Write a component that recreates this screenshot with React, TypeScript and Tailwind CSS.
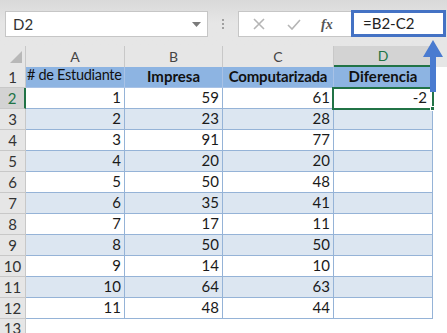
import React from "react";

const data: [number, number, number][] = [
  [1, 59, 61],
  [2, 23, 28],
  [3, 91, 77],
  [4, 20, 20],
  [5, 50, 48],
  [6, 35, 41],
  [7, 17, 11],
  [8, 50, 50],
  [9, 14, 10],
  [10, 64, 63],
  [11, 48, 44],
];

const font = { fontFamily: "Lato, 'Liberation Sans', sans-serif" };

export default function App() {
  return (
    <div className="relative w-[447px] h-[333px] overflow-hidden bg-white text-[15px] text-[#1a1a1a]" style={font}>
      {/* Top bar */}
      <div className="h-[46px] bg-[#e6e6e6] bg-gradient-to-b from-[#d9d9d9] via-[#e6e6e6] to-[#e6e6e6] flex items-start pt-[11px] pl-[5px]">
        <div className="w-[203px] h-[26px] bg-white border border-[#c6c6c6] flex items-center justify-between pl-[7px] pr-[6px]">
          <span className="text-[15px] text-[#333]">D2</span>
          <svg width="9" height="5" viewBox="0 0 9 5"><path d="M0 0H9L4.5 5Z" fill="#7a7a7a" /></svg>
        </div>
        <div className="w-[30px] h-[26px] flex flex-col items-center justify-center gap-[2px]">
          <div className="w-[2px] h-[2px] bg-[#a0a0a0]" />
          <div className="w-[2px] h-[2px] bg-[#a0a0a0]" />
          <div className="w-[2px] h-[2px] bg-[#a0a0a0]" />
        </div>
        <div className="w-[113px] h-[26px] bg-white border border-[#c6c6c6] border-r-0 flex items-center">
          <svg className="ml-[14px]" width="12" height="12" viewBox="0 0 12 12">
            <path d="M1 1L11 11M11 1L1 11" stroke="#b5b5b5" strokeWidth="1.6" />
          </svg>
          <svg className="ml-[22px]" width="14" height="11" viewBox="0 0 14 11">
            <path d="M1 6L5 10L13 1" stroke="#b5b5b5" strokeWidth="1.6" fill="none" />
          </svg>
          <span className="ml-[20px] italic font-bold text-[14px] text-[#555]" style={{ fontFamily: "'Liberation Serif', serif" }}>fx</span>
        </div>
        <div className="w-[95px] h-[27px] -mt-[1px] bg-white border-[3px] border-[#4472c4] flex items-center pl-[9px]">
          <span className="text-[15px] text-[#222]">=B2-C2</span>
        </div>
      </div>

      {/* Sheet */}
      <div className="grid grid-cols-[26px_99px_98px_111px_99px_1fr] auto-rows-[21px]">
        {/* Column header row */}
        <div className="relative bg-[#e6e6e6] border-r border-[#c8c8c8]">
          <svg className="absolute right-[3px] bottom-[4px]" width="12" height="12" viewBox="0 0 12 12">
            <path d="M12 0V12H0Z" fill="#b8b8b8" />
          </svg>
        </div>
        {["A", "B", "C"].map((c) => (
          <div key={c} className="bg-[#e6e6e6] border-r border-[#c8c8c8] flex items-center justify-center text-[14px] text-[#444]">
            {c}
          </div>
        ))}
        <div className="bg-[#d3d3d3] border-r border-[#c8c8c8] border-b-2 border-b-[#217346] flex items-center justify-center text-[14px] text-[#217346]">
          D
        </div>
        <div className="bg-[#e6e6e6]" />

        {/* Row 1 */}
        <div className="bg-[#e6e6e6] border-r border-b border-[#c8c8c8] flex items-center justify-center text-[15px] text-[#333]">1</div>
        <div className="bg-[#8db4e2] border-r border-b border-[#a8c2e6] flex items-end pb-[1px] pl-[1px] text-[14.5px] tracking-[-0.3px] whitespace-nowrap overflow-hidden text-[#111]">
          # de Estudiante
        </div>
        <div className="bg-[#8db4e2] border-r border-b border-[#a8c2e6] flex items-end justify-center font-bold text-[15px] whitespace-nowrap text-[#111]">
          Impresa
        </div>
        <div className="bg-[#8db4e2] border-r border-b border-[#a8c2e6] flex items-end justify-center font-bold text-[15px] tracking-[-0.2px] whitespace-nowrap overflow-hidden text-[#111]">
          Computarizada
        </div>
        <div className="bg-[#8db4e2] border-r border-b border-[#a8c2e6] flex items-end justify-center font-bold text-[15px] whitespace-nowrap text-[#111]">
          Diferencia
        </div>
        <div className="bg-white" />

        {data.map(([s, i, c], idx) => {
          const row = idx + 2;
          const band = row % 2 === 1;
          const bg = band ? "bg-[#dce6f1]" : "bg-white";
          const selected = row === 2;
          return (
            <React.Fragment key={row}>
              <div
                className={
                  selected
                    ? "bg-[#d3d3d3] border-r-2 border-r-[#217346] border-b border-b-[#c8c8c8] flex items-center justify-center text-[15px] text-[#217346]"
                    : "bg-[#e6e6e6] border-r border-b border-[#c8c8c8] flex items-center justify-center text-[15px] text-[#333]"
                }
              >
                {row}
              </div>
              <div className={`${bg} border-r border-b border-[#95b3d7] flex items-end justify-end pr-[3px] text-[15px]`}>{s}</div>
              <div className={`${bg} border-r border-b border-[#95b3d7] flex items-end justify-end pr-[3px] text-[15px]`}>{i}</div>
              <div className={`${bg} border-r border-b border-[#95b3d7] flex items-end justify-end pr-[3px] text-[15px]`}>{c}</div>
              <div className={`${bg} border-r border-b border-[#95b3d7] flex items-end justify-end pr-[5px] text-[15px]`}>
                {selected ? i - c : ""}
              </div>
              <div className="bg-white" />
            </React.Fragment>
          );
        })}

        <div className="h-[14px] bg-[#e6e6e6] border-r border-[#c8c8c8] flex items-start justify-center text-[15px] leading-[18px] text-[#333] overflow-hidden">13</div>
        <div className="col-span-5 bg-white" />
      </div>

      {/* Active cell border */}
      <div className="absolute left-[332px] top-[87px] w-[102px] h-[23px] border-2 border-[#217346] pointer-events-none" />
      <div className="absolute left-[430px] top-[106px] w-[5px] h-[5px] bg-[#217346] border border-white" />

      {/* Arrow */}
      <svg className="absolute left-[420px] top-[38px]" width="26" height="56" viewBox="0 0 26 56">
        <path d="M13 2L23 19H16V54H10V19H3Z" fill="#4a7bd0" />
      </svg>
    </div>
  );
}
